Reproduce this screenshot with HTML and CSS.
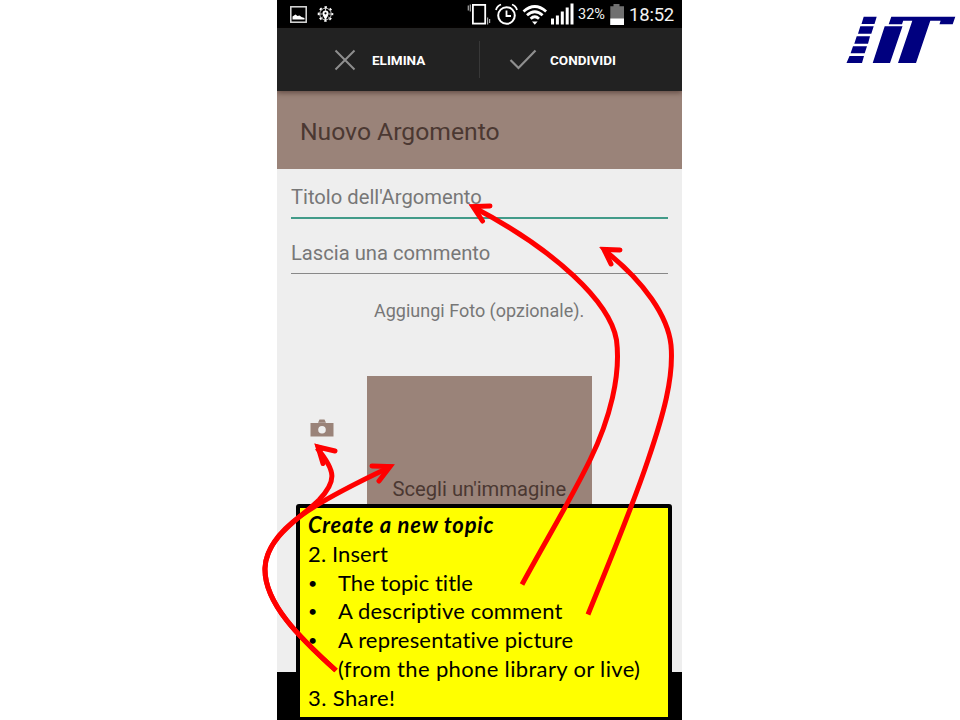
FILE: index.html
```html
<!DOCTYPE html>
<html lang="it">
<head>
<meta charset="utf-8">
<title>Nuovo Argomento</title>
<link rel="stylesheet" href="styles.css">
</head>
<body>
<main class="slide">
  <section class="phone">
    <div class="status">
      <svg class="status-left" width="50" height="28" viewBox="0 0 50 28">
        <rect x="3.8" y="6.800" width="15.400" height="15.400" fill="none" stroke="#ddd" stroke-width="1.500"/>
        <path d="M5.500 19.500v-3l3-2 2 1.500 2-.5 2 1.500 3 1v1.500z" fill="#fff"/>
        <circle cx="38.500" cy="14" r="5.800" fill="none" stroke="#ccc" stroke-width="1"/>
        <circle cx="38.500" cy="14" r="6.900" fill="none" stroke="#fff" stroke-width="1.800" stroke-dasharray="2.400 3.020" stroke-dashoffset="1.200"/>
        <path d="M38.500 20.500c-1-3-3-4.500-3-7a3 3 0 0 1 6 0c0 2.500-2 4-3 7z" fill="#fff"/>
        <circle cx="38.500" cy="13.300" r="1.100" fill="#000"/>
        <path d="M38.500 8v3M33 14h2.500M44 14h-2.500M34.500 18l1.500-1.500M42.500 18l-1.500-1.500" stroke="#ccc"/>
      </svg>
      <div class="status-right">
        <svg width="108" height="28" viewBox="0 0 108 28" fill="none" stroke="#fff">
          <rect x="5.900" y="4.900" width="12.300" height="18.700" stroke-width="1.800"/>
          <path d="M1.300 5.500v5M3.300 4.500v7M20.600 17.500v7M22.600 19v4" stroke="#aaa" stroke-width="1.200"/>
          <circle cx="39.500" cy="15.500" r="8.300" stroke-width="2"/>
          <path d="M39.500 10.500v5.500h4.500" stroke-width="1.800"/>
          <path d="M29 10q1-4 5-5.500M50 10q-1-4-5-5.500" stroke-width="1.800"/>
          <path d="M56.500 11.500q11.300-10 22.600 0M60 15.200q7.800-7 15.600 0M63.600 18.800q4.200-4 8.400 0" stroke-width="2.800"/>
          <path d="M65 21.500h5.600l-2.800 3.300z" fill="#fff" stroke="none"/>
          <path d="M84 24.500v-6h3v6zM88.900 24.500v-9h3v9zM93.800 24.500v-13h3v13zM98.700 24.500v-17h3v17zM103.500 24.500v-21h3v21z" fill="#fff" stroke="none"/>
        </svg>
        <span class="percent">32%</span>
        <svg class="battery" width="14" height="28" viewBox="0 0 14 28"><path d="M3.500 4h6v2.300H14V25H.300V6.300h3.200z" fill="#707070"/><path d="M.300 18.500H14V25H.300z" fill="#fff"/></svg>
        <span class="clock">18:52</span>
      </div>
    </div>
    <nav class="actions">
      <div class="action discard">
        <svg width="22" height="22" viewBox="0 0 22 22"><path d="M1.500 1.500l19 19M20.500 1.500l-19 19" stroke="#8f8f8f" stroke-width="2"/></svg>
        <span>ELIMINA</span>
      </div>
      <div class="action share">
        <svg width="28" height="22" viewBox="0 0 28 22"><path d="M1.500 11l8 8L26.500 1.500" fill="none" stroke="#8f8f8f" stroke-width="2.200"/></svg>
        <span>CONDIVIDI</span>
      </div>
    </nav>
    <h1 class="heading"><span>Nuovo Argomento</span></h1>
    <div class="field title-field"><span>Titolo dell'Argomento</span></div>
    <div class="field comment-field"><span>Lascia una commento</span></div>
    <p class="hint"><span>Aggiungi Foto (opzionale).</span></p>
    <div class="photo">
      <svg class="camera" width="24" height="19" viewBox="0 0 24 19"><path d="M9.500 .5h5l1.500 3.200H8zM.500 4h23V17.500H.500z" fill="#9a8379"/><circle cx="12" cy="10.700" r="3.800" fill="#eee"/></svg>
      <div class="picker"><span>Scegli un'immagine</span></div>
    </div>
    <div class="navbar"></div>
  </section>
  <svg class="logo" width="112" height="52" viewBox="0 0 112 52" fill="#00007f">
    <path d="M18.700 3.800H31.700L29.500 11H16.500zM15.300 13.300H28.700L26.300 20.700H13zM11.700 23.300H25L23 30.700H9.300zM8 33.300H22L19.700 40.300H5.600zM4.500 43H19L17 50H1.500z"/>
    <path d="M46.300 3.800H110.300L107.700 11.200H94.500L95.600 7.700H85.300L71 50H53L67.300 7.700H58.200L57 11.200H43.700zM39.700 13.300H57.500L45 50H27.700z"/>
  </svg>
  <aside class="note">
    <h2><span>Create a new topic</span></h2>
    <p class="insert"><span>2. Insert</span></p>
    <ul>
      <li class="l1"><span>The topic title</span></li>
      <li class="l2"><span>A descriptive comment</span></li>
      <li class="l3"><span>A representative picture</span></li>
    </ul>
    <p class="l4"><span>(from the phone library or live)</span></p>
    <p class="last"><span>3. Share!</span></p>
  </aside>
  <svg class="arrows" width="960" height="720" viewBox="0 0 960 720" fill="none" stroke="#f00" stroke-width="5">
    <path d="M522 584.500C545 542 570 501 590 460C610 419 621 375 616.500 340C610 302 555 250 474 207.500"/>
    <path d="M588 614.500C608 565 632 508 648 460C663 416 674 378 671 345C668 317 645 282 604 250"/>
    <path d="M336 670.500C300 638 264 603 265 568C266 537 302 517 319 500C337 481 336 471 317 448"/>
    <path d="M336 670.500C300 638 264 603 265 568C267 529 316 502 389 467.500"/>
    <g stroke-linecap="round"><path d="M490 206L473 206.500L482.500 221M620 250L604 249.500L611 264M335 451L318 447L323 463.500M372 466L390 466.500L379 481"/></g>
    <path d="M469 204.500l14 1.500-6 7zM599 247l14 2-7 6zM314.500 443.500l12 4-8 7zM393.500 464.500l-14 0 6 8z" fill="#f00" stroke="none"/>
  </svg>
</main>
</body>
</html>
```
FILE: styles.css
```css
* { box-sizing: border-box; }
body { margin: 0; background: #fff; }
h1, h2, p, ul { margin: 0; padding: 0; font-weight: normal; }
svg { display: block; flex: none; }
.slide { position: relative; width: 960px; height: 720px; overflow: hidden; background: #fff; font-family: Roboto, sans-serif; }
.phone { width: 405px; height: 720px; margin-left: 277px; background: #eee; display: flex; flex-direction: column; overflow: hidden; }
.status { height: 28px; background: #000; color: #f2f2f2; display: flex; justify-content: space-between; padding-left: 10px; flex: none; }
.status-right { display: flex; width: 215px; line-height: 29px; white-space: nowrap; }
.percent { font-size: 14.5px; margin-left: 3px; width: 28px; line-height: 30px; }
.battery { margin-left: 4px; }
.clock { font-size: 18.5px; margin-left: 5px; line-height: 30px; letter-spacing: -.2px; }
.actions { height: 63px; flex: none; background: #222; display: flex; align-items: center; color: #fff; font-size: 13.5px; font-weight: 700; box-shadow: 0 2px 5px rgba(50,25,20,.5); z-index: 1; }
.action { display: flex; align-items: center; height: 37px; }
.discard { width: 203px; border-right: 1px solid #383838; padding-left: 57px; gap: 16px; }
.share { padding-left: 29px; gap: 13px; }
.heading { height: 78px; flex: none; background: #9a8379; color: #4b3832; font-size: 24.7px; line-height: 81px; padding-left: 23px; }
.field { margin: 0 14px; font-size: 20.2px; color: #777; flex: none; white-space: nowrap; }
.title-field { height: 50px; border-bottom: 2px solid #429b89; line-height: 57px; }
.comment-field { height: 55px; border-bottom: 1.500px solid #888; line-height: 68px; }
.hint { margin-top: 25px; height: 24px; line-height: 24px; padding-left: 97px; color: #777; font-size: 18px; flex: none; }
.photo { display: flex; height: 225px; margin-top: 53px; padding-left: 33px; flex: none; }
.camera { margin-top: 43px; }
.picker { width: 225px; height: 225px; margin-left: 33px; background: #9a8379; color: #4b3832; font-size: 20.2px; line-height: 227px; padding-left: 25.5px; }
.navbar { margin-top: auto; height: 48px; background: #000; flex: none; }
.logo { position: absolute; left: 845px; top: 13px; }
.note { position: absolute; left: 296px; top: 504px; width: 376px; height: 216px; border: 4px solid #000; border-bottom-width: 3px; border-radius: 3px; background: #ff0; color: #000; padding: 3px 0 0 8px; font: 22px/28.8px Lato, sans-serif; font-variant-ligatures: none; white-space: nowrap; }
.note h2 { font-size: 22px; font-weight: 700; font-style: italic; letter-spacing: .75px; }
.note ul { list-style: none; }
.note li { display: flex; }
.note li::before { content: "•"; width: 30px; flex: none; font-size: 16px; }
.insert { letter-spacing: .12px; }
.l1 { letter-spacing: .05px; }
.l2 { letter-spacing: .15px; }
.l3 { letter-spacing: .17px; }
.l4 { padding-left: 30px; letter-spacing: .35px; }
.last { letter-spacing: .4px; }
.arrows { position: absolute; left: 0; top: 0; }
```
